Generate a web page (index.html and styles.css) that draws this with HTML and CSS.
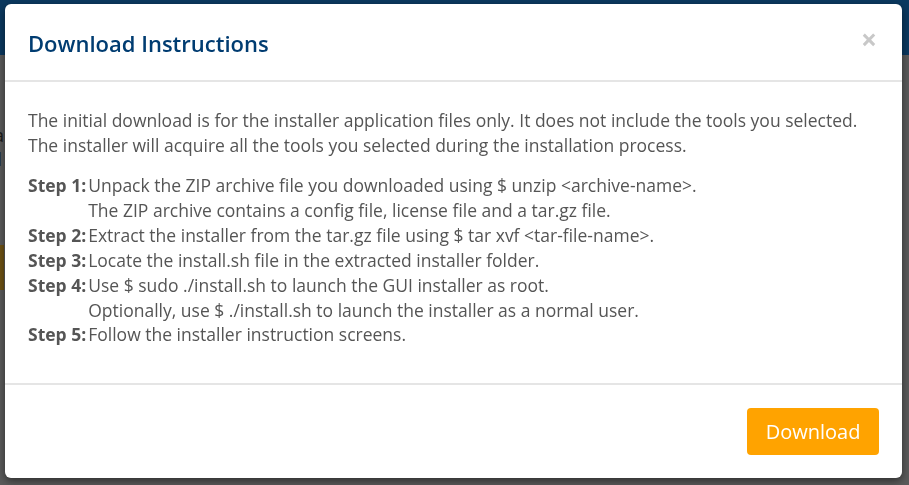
FILE: index.html
```html
<!DOCTYPE html>
<html>
<head>
<meta charset="utf-8">
<link rel="stylesheet" href="styles.css">
</head>
<body>
<div class="page">
  <div class="page-bar"></div>
  <div class="page-body">
    <p class="bg-line">a</p>
    <p class="bg-line">d</p>
    <div class="bg-btn"></div>
  </div>
</div>
<div class="backdrop">
  <div class="modal">
    <div class="modal-header">
      <h2 class="modal-title">Download Instructions</h2>
      <span class="close">&times;</span>
    </div>
    <div class="modal-body">
      <p class="intro">The initial download is for the installer application files only. It does not include the tools you selected. The installer will acquire all the tools you selected during the installation process.</p>
      <div class="steps">
        <span class="label">Step 1:</span>
        <span class="text">Unpack the ZIP archive file you downloaded using $ unzip &lt;archive-name&gt;.<br>The ZIP archive contains a config file, license file and a tar.gz file.</span>
        <span class="label">Step 2:</span>
        <span class="text">Extract the installer from the tar.gz file using $ tar xvf &lt;tar-file-name&gt;.</span>
        <span class="label">Step 3:</span>
        <span class="text">Locate the install.sh file in the extracted installer folder.</span>
        <span class="label">Step 4:</span>
        <span class="text">Use $ sudo ./install.sh to launch the GUI installer as root.<br>Optionally, use $ ./install.sh to launch the installer as a normal user.</span>
        <span class="label">Step 5:</span>
        <span class="text">Follow the installer instruction screens.</span>
      </div>
    </div>
    <div class="modal-footer">
      <button class="btn-download">Download</button>
    </div>
  </div>
</div>
</body>
</html>
```
FILE: styles.css
```css
html, body {
  margin: 0;
  padding: 0;
  height: 100%;
}
body {
  background: #5b5b5b;
  font-family: "Open Sans", "Noto Sans", sans-serif;
  overflow: hidden;
}
.page-bar {
  height: 55px;
  background: #0b3960;
}
.page-body {
  padding-top: 68px;
}
.bg-line {
  margin: 0;
  font-size: 18px;
  line-height: 24px;
  color: #1c1c1c;
  margin-left: -6px;
}
.bg-line + .bg-line {
  margin-left: -9px;
}
.bg-btn {
  margin-top: 74px;
  width: 4px;
  height: 45px;
  background: #6e5214;
}
.backdrop {
  position: fixed;
  inset: 0;
}
.modal {
  position: absolute;
  left: 5px;
  top: 4px;
  width: 897px;
  height: 474px;
  background: #fff;
  border-radius: 6px;
  box-shadow: 0 3px 9px rgba(0,0,0,0.5);
  display: flex;
  flex-direction: column;
}
.modal-header {
  height: 76px;
  border-bottom: 2px solid #e5e5e5;
  display: flex;
  align-items: center;
  justify-content: space-between;
  padding: 0 23px;
}
.modal-title {
  margin: 0;
  font-size: 22px;
  font-weight: 600;
  color: #003c71;
  padding-top: 2px;
}
.close {
  font-size: 28px;
  font-weight: 700;
  color: #c8c8c8;
  line-height: 1;
  margin-top: -6px;
  margin-right: 2px;
}
.modal-body {
  flex: 1;
  padding: 26px 23px 0;
  border-bottom: 2px solid #e5e5e5;
  color: #555;
  font-size: 17.5px;
  line-height: 25px;
}
.intro {
  margin: 0 0 15px;
}
.steps {
  display: grid;
  grid-template-columns: auto 1fr;
  column-gap: 2px;
  line-height: 24.9px;
}
.label {
  font-weight: 700;
}
.modal-footer {
  height: 93px;
  display: flex;
  align-items: flex-start;
  justify-content: flex-end;
  padding: 23px 23px 0;
  box-sizing: border-box;
}
.btn-download {
  width: 132px;
  height: 47px;
  background: #ffa300;
  border: none;
  border-radius: 4px;
  color: #fff;
  font-family: inherit;
  font-size: 20px;
  padding: 0;
}
```
